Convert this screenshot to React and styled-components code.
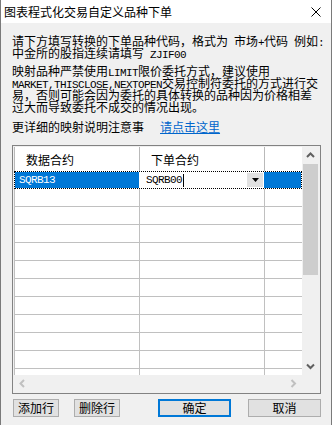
import React from "react"
import styled, { createGlobalStyle } from "styled-components"

const GlobalStyle = createGlobalStyle`
  html, body { margin: 0; padding: 0; background: #fff; }
  body { font-family: "Noto Sans CJK SC", "Noto Sans", sans-serif; color: #000; }
`

const CJK = `"Noto Sans CJK SC", "Noto Sans", sans-serif`
const MONO = `"Liberation Mono", "DejaVu Sans Mono", monospace`

const Window = styled.div`
  width: 332px;
  height: 425px;
  box-sizing: border-box;
  border-left: 1px solid #7a7a7a;
  border-right: 1px solid #7a7a7a;
  background: #f0f0f0;
  display: flex;
  flex-direction: column;
  overflow: hidden;
`

const TitleBar = styled.div`
  height: 23px;
  flex: none;
  background: #fff;
  display: flex;
  align-items: center;
  justify-content: space-between;
  padding: 0 10px 0 3px;
  font-family: ${CJK};
  font-size: 12px;
`

const Body = styled.div`
  flex: 1;
  display: flex;
  flex-direction: column;
  padding: 12px 10px 0 11px;
`

const Para = styled.div`
  margin-top: ${(p) => p.$mt || 0}px;
  height: 12px;
  font-family: ${CJK};
  font-size: 12px;
  line-height: 12px;
  white-space: nowrap;
`

const Lat = styled.span`
  font-family: ${MONO};
  font-size: 11px;
  line-height: 12px;
  letter-spacing: -0.6px;
`

const MoreRow = styled.div`
  margin-top: 8px;
  height: 12px;
  display: flex;
  gap: 16px;
  font-family: ${CJK};
  font-size: 12px;
  line-height: 12px;
  white-space: nowrap;
`

const Link = styled.a`
  color: #0066cc;
  text-decoration: underline;
  cursor: pointer;
`

const Frame = styled.div`
  margin-top: 12px;
  height: 249px;
  flex: none;
  box-sizing: border-box;
  border: 1px solid #828282;
  padding: 1px;
  background: #f0f0f0;
  display: flex;
  flex-direction: column;
`

const TopArea = styled.div`
  height: 228px;
  display: flex;
`

const Table = styled.div`
  width: 288px;
  height: 228px;
  background: #fff;
  overflow: hidden;
`

const HeaderRow = styled.div`
  display: grid;
  grid-template-columns: 125px 125px 38px;
  height: 24px;
`

const HeadCell = styled.div`
  box-sizing: border-box;
  border-left: 1px solid #b9b9b9;
  padding-left: 11px;
  display: flex;
  align-items: center;
  font-family: ${CJK};
  font-size: 12px;
`

const Row = styled.div`
  position: relative;
  display: grid;
  grid-template-columns: 125px 125px 38px;
  height: 18px;
  box-sizing: border-box;
  border-bottom: 1px solid #c0c0c0;
  background: ${(p) => (p.$selected ? "#0078d7" : "#fff")};

  ${(p) =>
    p.$selected &&
    `
    border-bottom: none;
    &::before, &::after {
      content: "";
      position: absolute;
      inset: 0;
      pointer-events: none;
    }
    &::before { border: 1px solid #fff; }
    &::after { border: 1px dotted #000; }
  `}
`

const Cell = styled.div`
  box-sizing: border-box;
  border-left: ${(p) => (p.$selected ? "none" : "1px solid #c0c0c0")};
  padding-left: 5px;
  display: flex;
  align-items: center;
  font-family: ${MONO};
  font-size: 11px;
  letter-spacing: -0.6px;
  color: ${(p) => (p.$selected ? "#fff" : "#000")};
`

const Editor = styled.div`
  background: #fff;
  display: flex;
  align-items: center;
  padding-left: 7px;
  font-family: ${MONO};
  font-size: 11px;
  letter-spacing: -0.6px;
  color: #000;
`

const Caret = styled.span`
  width: 1px;
  height: 13px;
  background: #000;
  margin-left: 1px;
`

const DropBtn = styled.div`
  margin-left: auto;
  margin-right: 1px;
  width: 16px;
  height: 14px;
  background: #e1e1e1;
  display: flex;
  align-items: center;
  justify-content: center;
`

const VScroll = styled.div`
  width: 17px;
  background: #f0f0f0;
  display: flex;
  flex-direction: column;
`

const ArrowBox = styled.div`
  width: 17px;
  height: 17px;
  flex: none;
  display: flex;
  align-items: center;
  justify-content: center;
  margin-top: ${(p) => (p.$bottom ? "auto" : "0")};
`

const Thumb = styled.div`
  height: 111px;
  margin: 0 1px;
  background: #cdcdcd;
`

const BottomArea = styled.div`
  height: 17px;
  display: flex;
`

const HScroll = styled.div`
  width: 288px;
  display: flex;
  justify-content: space-between;
`

const Buttons = styled.div`
  margin-top: 5px;
  display: flex;
  justify-content: space-between;
  padding-left: 1px;
`

const Group = styled.div`
  display: flex;
  gap: ${(p) => p.$gap}px;
`

const Btn = styled.button`
  width: ${(p) => p.$w}px;
  height: 18px;
  padding: 0;
  box-sizing: border-box;
  background: #e1e1e1;
  border: ${(p) => (p.$primary ? "2px solid #0078d7" : "1px solid #adadad")};
  font-family: ${CJK};
  font-size: 12px;
  line-height: 14px;
  color: #000;
`

function Chevron({ dir, color }) {
  const pts = {
    up: "1,5 4.5,1.5 8,5",
    down: "1,1.5 4.5,5 8,1.5",
    left: "5,1 1.5,4.5 5,8",
    right: "1.5,1 5,4.5 1.5,8",
  }[dir]
  const vertical = dir === "up" || dir === "down"
  return (
    <svg width={vertical ? 9 : 7} height={vertical ? 7 : 9}>
      <polyline points={pts} fill="none" stroke={color} strokeWidth="2" />
    </svg>
  )
}

function App() {
  const emptyRows = Array.from({ length: 11 }, (_, i) => i)

  return (
    <>
      <GlobalStyle />
      <Window>
        <TitleBar>
          <span>图表程式化交易自定义品种下单</span>
          <svg width="10" height="10" viewBox="0 0 10 10">
            <path d="M0.5 0.5 L9.5 9.5 M9.5 0.5 L0.5 9.5" stroke="#000" strokeWidth="1" />
          </svg>
        </TitleBar>

        <Body>
          <Para>
            请下方填写转换的下单品种代码，格式为<Lat> </Lat>市场<Lat>+</Lat>代码<Lat> </Lat>例如<Lat>:</Lat>
          </Para>
          <Para>
            中金所的股指连续请填写<Lat> ZJIF00</Lat>
          </Para>

          <Para $mt={6}>
            映射品种严禁使用<Lat>LIMIT</Lat>限价委托方式，建议使用
          </Para>
          <Para>
            <Lat>MARKET,THISCLOSE,NEXTOPEN</Lat>交易控制符委托的方式进行交
          </Para>
          <Para>易，否则可能会因为委托的具体转换的品种因为价格相差</Para>
          <Para>过大而导致委托不成交的情况出现。</Para>

          <MoreRow>
            <span>更详细的映射说明注意事</span>
            <Link>请点击这里</Link>
          </MoreRow>

          <Frame>
            <TopArea>
              <Table>
                <HeaderRow>
                  <HeadCell>数据合约</HeadCell>
                  <HeadCell>下单合约</HeadCell>
                  <HeadCell />
                </HeaderRow>
                <Row $selected>
                  <Cell $selected>SQRB13</Cell>
                  <Editor>
                    SQRB00
                    <Caret />
                    <DropBtn>
                      <svg width="7" height="4">
                        <polygon points="0,0 7,0 3.5,4" fill="#000" />
                      </svg>
                    </DropBtn>
                  </Editor>
                  <Cell $selected />
                </Row>
                {emptyRows.map((i) => (
                  <Row key={i}>
                    <Cell />
                    <Cell />
                    <Cell />
                  </Row>
                ))}
              </Table>
              <VScroll>
                <ArrowBox>
                  <Chevron dir="up" color="#606060" />
                </ArrowBox>
                <Thumb />
                <ArrowBox $bottom>
                  <Chevron dir="down" color="#606060" />
                </ArrowBox>
              </VScroll>
            </TopArea>
            <BottomArea>
              <HScroll>
                <ArrowBox>
                  <Chevron dir="left" color="#c0c0c0" />
                </ArrowBox>
                <ArrowBox>
                  <Chevron dir="right" color="#c0c0c0" />
                </ArrowBox>
              </HScroll>
            </BottomArea>
          </Frame>

          <Buttons>
            <Group $gap={15}>
              <Btn $w={46}>添加行</Btn>
              <Btn $w={46}>删除行</Btn>
            </Group>
            <Group $gap={17}>
              <Btn $w={73} $primary>确定</Btn>
              <Btn $w={73}>取消</Btn>
            </Group>
          </Buttons>
        </Body>
      </Window>
    </>
  )
}

export default App
